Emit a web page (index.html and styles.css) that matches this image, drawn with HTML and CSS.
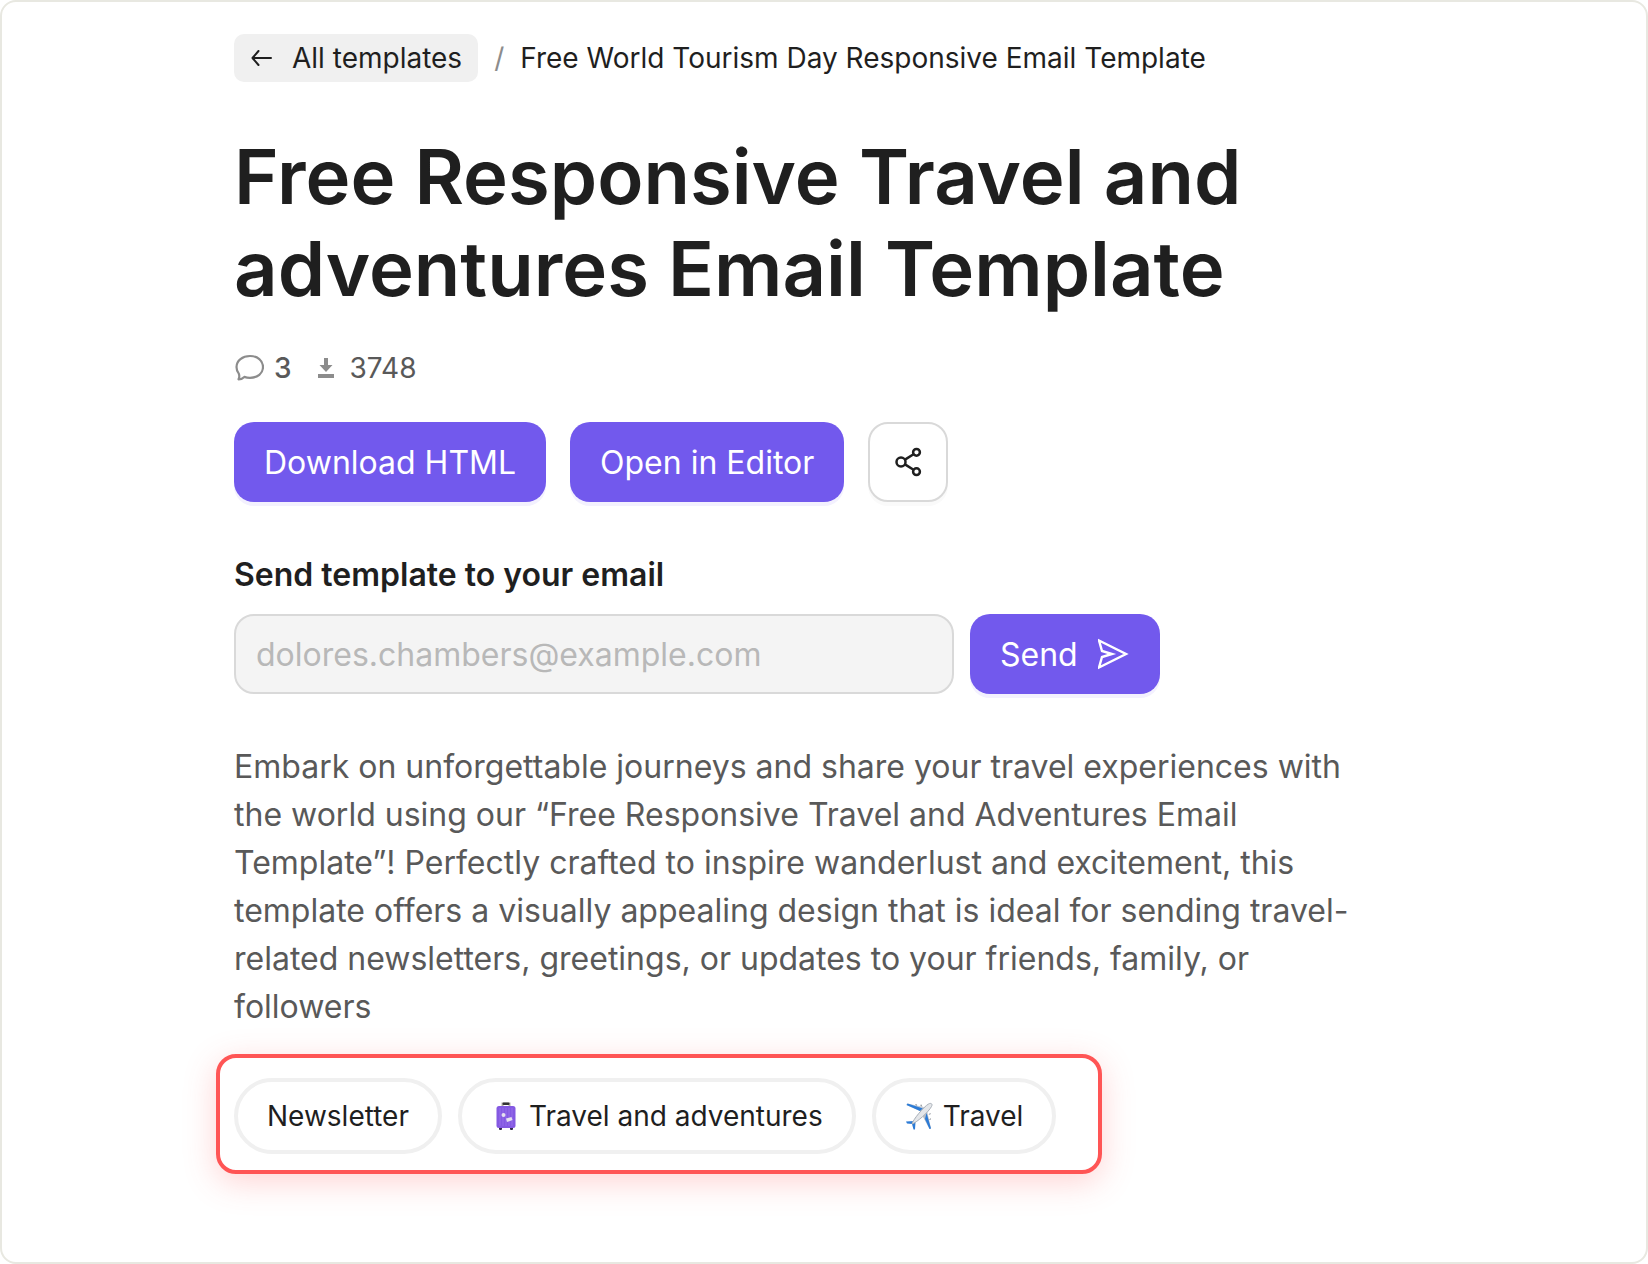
FILE: index.html
```
<!DOCTYPE html>
<html lang="en">
<head>
  <meta charset="UTF-8">
  <meta name="viewport" content="width=device-width, initial-scale=1.0">
  <title>Free Responsive Travel and adventures Email Template</title>
  <link rel="stylesheet" href="styles.css">
</head>
<body>
  <main class="page">
    <div class="container">
      <nav class="breadcrumbs" aria-label="Breadcrumbs">
        <a class="back-link" href="#">
          <svg width="22" height="16" viewBox="0 0 22 16" fill="none" stroke="currentColor" stroke-width="2" stroke-linecap="round" stroke-linejoin="round" aria-hidden="true">
            <path d="M21 8H2.500M8.500 1L2.500 8L8.500 15"/>
          </svg>
          All templates
        </a>
        <span class="separator">/</span>
        <span>Free World Tourism Day Responsive Email Template</span>
      </nav>

      <h1>Free Responsive Travel and adventures Email Template</h1>

      <div class="stats">
        <span class="stat comments">
          <svg width="30" height="28" viewBox="0 0 30 28" fill="none" stroke="#8c8c8c" stroke-width="2.200" stroke-linejoin="round" aria-hidden="true">
            <path d="M16 2C23.500 2 29 6.500 29 13C29 19.500 23.500 23.800 16 23.800C14 23.800 12 23.500 10.300 22.900C9 24.300 7 25.300 4.500 25.300C5.500 23.500 5.500 21.500 4.800 19.600C3.300 17.800 2.500 15.500 2.500 13C2.500 6.500 8.500 2 16 2Z"/>
          </svg>
          3
        </span>
        <span class="stat">
          <svg width="18" height="22" viewBox="0 0 18 22" fill="#8c8c8c" aria-hidden="true">
            <path d="M8 1H12V8H16.500L10 15L3.500 8H8ZM2 17H18V21H2Z"/>
          </svg>
          3748
        </span>
      </div>

      <div class="actions">
        <button class="btn" type="button">Download HTML</button>
        <button class="btn" type="button">Open in Editor</button>
        <button class="share-btn" type="button" aria-label="Share">
          <svg width="28" height="30" viewBox="0 0 28 30" fill="none" stroke="currentColor" stroke-width="2.500" aria-hidden="true">
            <circle cx="7" cy="15" r="4.500"/>
            <circle cx="22.500" cy="5.300" r="3.400"/>
            <circle cx="22.500" cy="24.700" r="3.400"/>
            <path d="M11 12.600L19.500 7.200M11 17.400L19.500 22.800"/>
          </svg>
        </button>
      </div>

      <form class="send-form">
        <label for="email">Send template to your email</label>
        <div class="send-row">
          <input type="email" id="email" placeholder="dolores.chambers@example.com">
          <button class="btn" type="button">
            Send
            <svg width="32" height="32" viewBox="0 0 32 32" fill="none" stroke="currentColor" stroke-width="2.400" aria-hidden="true">
              <path d="M1 2.500L28 16L1 29.500L4 19L14 16L4 13Z"/>
            </svg>
          </button>
        </div>
      </form>

      <p class="description">Embark on unforgettable journeys and share your travel experiences with the world using our “Free Responsive Travel and Adventures Email Template”! Perfectly crafted to inspire wanderlust and excitement, this template offers a visually appealing design that is ideal for sending travel-related newsletters, greetings, or updates to your friends, family, or followers</p>

      <div class="tags">
        <a class="tag" href="#">Newsletter</a>
        <a class="tag" href="#">
          <svg width="28" height="30" viewBox="0 0 28 30" aria-hidden="true">
            <path d="M11.500 6V2.500H18.500V6" fill="none" stroke="#b5b2aa" stroke-width="2"/>
            <rect x="11.500" y="1.500" width="7" height="2.500" rx="1" fill="#333"/>
            <rect x="8" y="26" width="3" height="3" rx="1" fill="#33284d"/>
            <rect x="19" y="26" width="3" height="3" rx="1" fill="#33284d"/>
            <rect x="5.500" y="5" width="19" height="22" rx="2.500" fill="#8459e2"/>
            <path d="M9 7V25M12 7V25M15 7V25M18 7V25M21 7V25" stroke="#966eea"/>
            <circle cx="12.500" cy="14" r="2" fill="#e6e1ee"/>
            <path d="M15 17.500L20.500 16L21.500 19L16 21Z" fill="#e6e1ee"/>
          </svg>
          Travel and adventures
        </a>
        <a class="tag" href="#">
          <svg width="28" height="28" viewBox="0 0 28 28" aria-hidden="true">
            <path d="M10 2.500L11.500 2L12.500 5M15 3L16.500 2.500L17.500 5.500M25 11L26 12L23.500 13M25.500 16L26 17.500L24 18" fill="#8e9299"/>
            <path d="M17 10L1.500 3L2.500 1.500L21 5.500Z" fill="#c3cbd5"/>
            <path d="M1.500 3L2.500 1.500L18 6.500L15 9Z" fill="#2c7bd6"/>
            <path d="M22 9L26 26.500L24.500 27L17 13Z" fill="#b9bfc7"/>
            <path d="M21.500 11L26 26.500L24.500 27L20 17Z" fill="#2c7bd6"/>
            <path d="M9 19L1 19.500L2 21.500L7 22L8.500 27.500H10L10.500 20Z" fill="#2c7bd6"/>
            <path d="M7 22C8 17.500 19 4.500 23.500 2C26 0.500 28 2 26.500 4.500C24 9.500 12 20.500 7 22Z" fill="#e4e6e9" stroke="#a8afb8"/>
          </svg>
          Travel
        </a>
      </div>
    </div>
  </main>
</body>
</html>
```
FILE: styles.css
```
* {
  box-sizing: border-box;
}

body {
  margin: 0;
  font-family: Inter, "Liberation Sans", sans-serif;
  color: #1f1f1f;
  background-color: #fff;
}

button,
input {
  font: inherit;
}

a {
  color: inherit;
  text-decoration: none;
}

svg {
  flex: none;
}

.page {
  min-height: 100vh;
  padding: 32px 24px;
  border: 2px solid #e8e8e1;
  border-radius: 16px;
}

.container {
  max-width: 1180px;
  margin: 0 auto;
}

.breadcrumbs {
  display: flex;
  align-items: center;
  gap: 16px;
  font-size: 28px;
  line-height: 48px;
}

.back-link {
  display: flex;
  align-items: center;
  gap: 20px;
  padding: 0 16px;
  background-color: #f0f0f0;
  border-radius: 10px;
}

.separator {
  color: #8c8c8c;
}

h1 {
  max-width: 1120px;
  margin: 48px 0 34px;
  font-size: 76px;
  font-weight: 600;
  line-height: 92px;
}

.stats {
  display: flex;
  gap: 24px;
  margin-bottom: 34px;
  color: #595959;
  font-size: 28px;
  line-height: 40px;
}

.stat {
  display: flex;
  align-items: center;
  gap: 16px;
}

.comments {
  gap: 10px;
  font-weight: 500;
}

.actions {
  display: flex;
  gap: 24px;
}

.btn {
  display: flex;
  align-items: center;
  gap: 20px;
  height: 80px;
  padding: 0 30px;
  border: none;
  border-radius: 20px;
  background-color: #7259ed;
  box-shadow: 0 4px 0 #f3f1fe;
  color: #fff;
  font-size: 32px;
  cursor: pointer;
}

.share-btn {
  display: flex;
  align-items: center;
  justify-content: center;
  width: 80px;
  height: 80px;
  padding: 0;
  border: 2px solid #d9d9d9;
  border-radius: 20px;
  background-color: #fff;
  box-shadow: 0 4px 0 #fafafa;
  color: #1f1f1f;
  cursor: pointer;
}

.btn:hover {
  background-color: #6248de;
}

.send-form {
  margin-top: 53px;
}

.send-form label {
  display: block;
  margin-bottom: 19px;
  font-size: 32px;
  font-weight: 600;
  line-height: 40px;
}

.send-row {
  display: flex;
  gap: 16px;
}

.send-row input {
  flex: 0 1 720px;
  min-width: 0;
  height: 80px;
  padding: 0 20px;
  border: 2px solid #d9d9d9;
  border-radius: 20px;
  background-color: #f4f4f4;
  color: #1f1f1f;
  font-size: 32px;
}

.send-row input::placeholder {
  color: #b8b8b8;
}

.description {
  max-width: 1120px;
  margin: 49px 0 23px;
  color: #595959;
  font-size: 32px;
  line-height: 48px;
}

.tags {
  display: flex;
  flex-wrap: wrap;
  gap: 16px;
  width: fit-content;
  margin-left: -18px;
  padding: 20px 42px 16px 14px;
  border: 4px solid #ff5555;
  border-radius: 20px;
  box-shadow: 0 8px 32px rgba(255, 85, 85, 0.25);
}

.tag {
  display: flex;
  align-items: center;
  gap: 10px;
  padding: 0 29px;
  border: 4px solid #f0f0f0;
  border-radius: 38px;
  font-size: 28px;
  line-height: 68px;
}
```
